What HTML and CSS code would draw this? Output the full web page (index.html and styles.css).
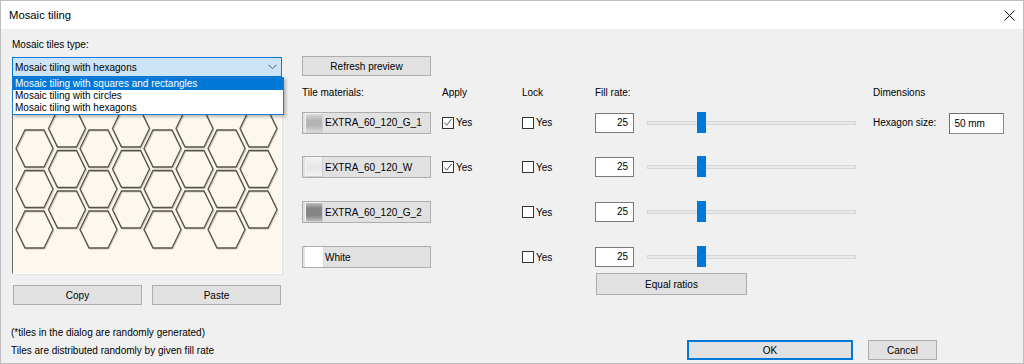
FILE: index.html
```html
<!DOCTYPE html>
<html lang="en">
<head>
<meta charset="utf-8">
<title>Mosaic tiling</title>
<link rel="stylesheet" href="styles.css">
</head>
<body>
<div class="dialog">
  <div class="titlebar">
    <span class="title">Mosaic tiling</span>
    <svg class="close" width="11" height="11" viewBox="0 0 11 11"><path d="M0.5 0.5 L10.5 10.5 M10.5 0.5 L0.5 10.5" stroke="#111" stroke-width="1" fill="none"/></svg>
  </div>
  <div class="content">
    <div class="leftcol">
      <div class="label">Mosaic tiles type:</div>
      <div class="combo-wrap">
        <div class="combo">
          <span>Mosaic tiling with hexagons</span>
          <svg class="chev" width="9" height="6" viewBox="0 0 9 6"><polyline points="0.5,0.8 4.5,4.8 8.5,0.8" fill="none" stroke="#5c5c5c" stroke-width="1"/></svg>
        </div>
        <div class="dropdown">
          <div class="item sel">Mosaic tiling with squares and rectangles</div>
          <div class="item">Mosaic tiling with circles</div>
          <div class="item">Mosaic tiling with hexagons</div>
        </div>
      </div>
      <div class="preview">
        <svg width="268" height="188" viewBox="13 85 268 188">
          <defs>
            <path id="hx" d="M0 18.5 L9 0 L28 0 L37 18.5 L28 37 L9 37 Z" fill="none"/>
          </defs>
          <g class="hshadow" transform="translate(1,1)">
            <use href="#hx" x="16" y="130"/><use href="#hx" x="16" y="170.5"/><use href="#hx" x="16" y="211"/>
            <use href="#hx" x="48.5" y="69.5"/><use href="#hx" x="48.5" y="110"/><use href="#hx" x="48.5" y="150.5"/><use href="#hx" x="48.5" y="191"/>
            <use href="#hx" x="80" y="130"/><use href="#hx" x="80" y="170.5"/><use href="#hx" x="80" y="211"/>
            <use href="#hx" x="112.5" y="69.5"/><use href="#hx" x="112.5" y="110"/><use href="#hx" x="112.5" y="150.5"/><use href="#hx" x="112.5" y="191"/>
            <use href="#hx" x="144" y="130"/><use href="#hx" x="144" y="170.5"/><use href="#hx" x="144" y="211"/>
            <use href="#hx" x="176" y="69.5"/><use href="#hx" x="176" y="110"/><use href="#hx" x="176" y="150.5"/><use href="#hx" x="176" y="191"/>
            <use href="#hx" x="208" y="130"/><use href="#hx" x="208" y="170.5"/><use href="#hx" x="208" y="211"/>
            <use href="#hx" x="240" y="69.5"/><use href="#hx" x="240" y="110"/><use href="#hx" x="240" y="150.5"/><use href="#hx" x="240" y="191"/>
          </g>
          <g class="hline">
            <use href="#hx" x="16" y="130"/><use href="#hx" x="16" y="170.5"/><use href="#hx" x="16" y="211"/>
            <use href="#hx" x="48.5" y="69.5"/><use href="#hx" x="48.5" y="110"/><use href="#hx" x="48.5" y="150.5"/><use href="#hx" x="48.5" y="191"/>
            <use href="#hx" x="80" y="130"/><use href="#hx" x="80" y="170.5"/><use href="#hx" x="80" y="211"/>
            <use href="#hx" x="112.5" y="69.5"/><use href="#hx" x="112.5" y="110"/><use href="#hx" x="112.5" y="150.5"/><use href="#hx" x="112.5" y="191"/>
            <use href="#hx" x="144" y="130"/><use href="#hx" x="144" y="170.5"/><use href="#hx" x="144" y="211"/>
            <use href="#hx" x="176" y="69.5"/><use href="#hx" x="176" y="110"/><use href="#hx" x="176" y="150.5"/><use href="#hx" x="176" y="191"/>
            <use href="#hx" x="208" y="130"/><use href="#hx" x="208" y="170.5"/><use href="#hx" x="208" y="211"/>
            <use href="#hx" x="240" y="69.5"/><use href="#hx" x="240" y="110"/><use href="#hx" x="240" y="150.5"/><use href="#hx" x="240" y="191"/>
          </g>
        </svg>
      </div>
      <div class="btn-row">
        <div class="btn half">Copy</div>
        <div class="btn half">Paste</div>
      </div>
    </div>
    <div class="rightcol">
      <div class="btn refresh">Refresh preview</div>
      <div class="grid-row header">
        <div>Tile materials:</div>
        <div>Apply</div>
        <div>Lock</div>
        <div>Fill rate:</div>
        <div>Dimensions</div>
      </div>
      <div class="rows">
        <div class="grid-row">
          <div class="btn material"><span class="swatch sw-g1"></span>EXTRA_60_120_G_1</div>
          <div class="check"><span class="box"><svg width="11" height="11" viewBox="0 0 11 11"><polyline points="1.5,5.5 4,8.5 9.5,1.5" fill="none" stroke="#555" stroke-width="1.1"/></svg></span>Yes</div>
          <div class="check"><span class="box"></span>Yes</div>
          <div class="fill"><div class="num">25</div><div class="slider"><div class="thumb"></div></div></div>
          <div class="dims"><span>Hexagon size:</span><div class="size">50 mm</div></div>
        </div>
        <div class="grid-row">
          <div class="btn material"><span class="swatch sw-w"></span>EXTRA_60_120_W</div>
          <div class="check"><span class="box"><svg width="11" height="11" viewBox="0 0 11 11"><polyline points="1.5,5.5 4,8.5 9.5,1.5" fill="none" stroke="#555" stroke-width="1.1"/></svg></span>Yes</div>
          <div class="check"><span class="box"></span>Yes</div>
          <div class="fill"><div class="num">25</div><div class="slider"><div class="thumb"></div></div></div>
          <div></div>
        </div>
        <div class="grid-row">
          <div class="btn material"><span class="swatch sw-g2"></span>EXTRA_60_120_G_2</div>
          <div></div>
          <div class="check"><span class="box"></span>Yes</div>
          <div class="fill"><div class="num">25</div><div class="slider"><div class="thumb"></div></div></div>
          <div></div>
        </div>
        <div class="grid-row">
          <div class="btn material"><span class="swatch sw-white"></span>White</div>
          <div></div>
          <div class="check"><span class="box"></span>Yes</div>
          <div class="fill"><div class="num">25</div><div class="slider"><div class="thumb"></div></div></div>
          <div></div>
        </div>
      </div>
      <div class="btn equal">Equal ratios</div>
    </div>
  </div>
  <div class="footer">
    <div class="notes">
      <div>(*tiles in the dialog are randomly generated)</div>
      <div>Tiles are distributed randomly by given fill rate</div>
    </div>
    <div class="actions">
      <div class="btn ok">OK</div>
      <div class="btn cancel">Cancel</div>
    </div>
  </div>
</div>
</body>
</html>
```

FILE: styles.css
```css
* { box-sizing: border-box; }
html, body { margin: 0; padding: 0; background: #f0f0f0; }
body {
  font-family: "Liberation Sans", Arial, sans-serif;
  font-size: 10px;
  color: #000;
}
.dialog {
  width: 1024px;
  height: 364px;
  border: 1px solid #bdbdbd;
  background: #f0f0f0;
  overflow: hidden;
}
.titlebar {
  height: 28px;
  background: #fff;
  display: flex;
  align-items: center;
  justify-content: space-between;
  padding: 0 8px 0 8px;
}
.title { font-size: 11.3px; }
.close { display: block; margin-top: 1px; }

.content {
  display: flex;
  gap: 20px;
  padding: 9px 0 0 11px;
}
.leftcol { width: 270px; }
.label { line-height: 14px; height: 14px; }
.combo-wrap { position: relative; margin-top: 5px; }
.combo {
  height: 20px;
  border: 1px solid #0078d7;
  background: #cce4f7;
  display: flex;
  align-items: center;
  justify-content: space-between;
  padding: 0 4px 0 2px;
}
.chev { display: block; }
.dropdown {
  position: absolute;
  top: 100%;
  left: 0;
  width: 272px;
  background: #fff;
  border: 1px solid #1d7ad0;
  box-shadow: 2px 2px 3px rgba(0,0,0,0.25);
  z-index: 2;
}
.item { height: 12px; line-height: 12px; padding-left: 2px; }
.item.sel { background: #0078d7; color: #fff; }
.preview {
  margin-top: 7px;
  height: 190px;
  background: #fcf8ee;
  border-top: 1px solid #a0a0a0;
  border-left: 1px solid #6a6a6a;
  border-right: 1px solid #ffffff;
  border-bottom: 1px solid #ffffff;
  box-shadow: 1px 1px 0 #e3e3e3;
  overflow: hidden;
}
.preview svg { display: block; }
.hline use { stroke: #55524c; stroke-width: 1.3; }
.hshadow use { stroke: #c9c5bd; stroke-width: 1; }

.btn {
  background: #e1e1e1;
  border: 1px solid #adadad;
  display: flex;
  align-items: center;
  justify-content: center;
  height: 20px;
}
.btn-row { display: flex; gap: 10px; margin-top: 11px; padding-left: 1px; }
.half { width: 129px; }

.rightcol { flex: 1; }
.refresh { width: 129px; margin-top: 18px; }
.grid-row {
  display: grid;
  grid-template-columns: 140px 80px 73px 278px 1fr;
  align-items: center;
  height: 22px;
}
.grid-row.header { margin-top: 10px; height: 14px; line-height: 14px; }
.rows { margin-top: 11px; display: flex; flex-direction: column; gap: 23px; }
.material {
  width: 129px;
  height: 22px;
  justify-content: flex-start;
  padding-left: 2px;
}
.swatch {
  width: 18px;
  height: 20px;
  margin-right: 2px;
  border: 1px solid #f4f4f4;
  border-right-color: #d0d0d0;
  border-bottom-color: #d0d0d0;
}
.sw-g1 { background: linear-gradient(#dadada, #b4b4b4 35%, #b4b4b4 65%, #dadada); }
.sw-w { background: linear-gradient(#f2f2f2, #e8e8e8 40%, #e8e8e8 60%, #f2f2f2); }
.sw-g2 { background: linear-gradient(#bcbcbc, #858585 30%, #858585 70%, #bcbcbc); }
.sw-white { background: #fff; border-color: #fff; }
.check { display: flex; align-items: center; gap: 2px; }
.box {
  width: 12px;
  height: 12px;
  border: 1px solid #333;
  background: #fff;
  display: flex;
  align-items: center;
  justify-content: center;
}
.box svg { display: block; }
.fill { display: flex; align-items: center; }
.num {
  width: 39px;
  height: 20px;
  background: #fff;
  border: 1px solid #7a7a7a;
  text-align: right;
  padding-right: 5px;
  line-height: 18px;
}
.slider {
  position: relative;
  margin-left: 13px;
  width: 209px;
  height: 4px;
  background: #e7eaea;
  border: 1px solid #d6d6d6;
}
.thumb {
  position: absolute;
  left: 49px;
  top: -10px;
  width: 9px;
  height: 21px;
  background: #0078d7;
}
.dims { display: flex; align-items: center; }
.size {
  margin-left: 13px;
  margin-top: 2px;
  width: 55px;
  height: 21px;
  background: #fff;
  border: 1px solid #8a8a8a;
  border-top-color: #6d6d6d;
  border-left-color: #6d6d6d;
  padding-left: 4px;
  line-height: 19px;
}
.equal { width: 151px; height: 22px; margin-top: 5px; margin-left: 294px; }

.footer {
  display: flex;
  justify-content: space-between;
  align-items: flex-end;
  margin-top: 19px;
  padding: 0 86px 0 10px;
}
.notes div { line-height: 18px; }
.actions { display: flex; gap: 15px; margin-bottom: 0; }
.ok {
  width: 166px;
  border: 1px solid #0078d7;
  box-shadow: inset 0 0 0 1px #0078d7;
}
.cancel { width: 69px; }
```
